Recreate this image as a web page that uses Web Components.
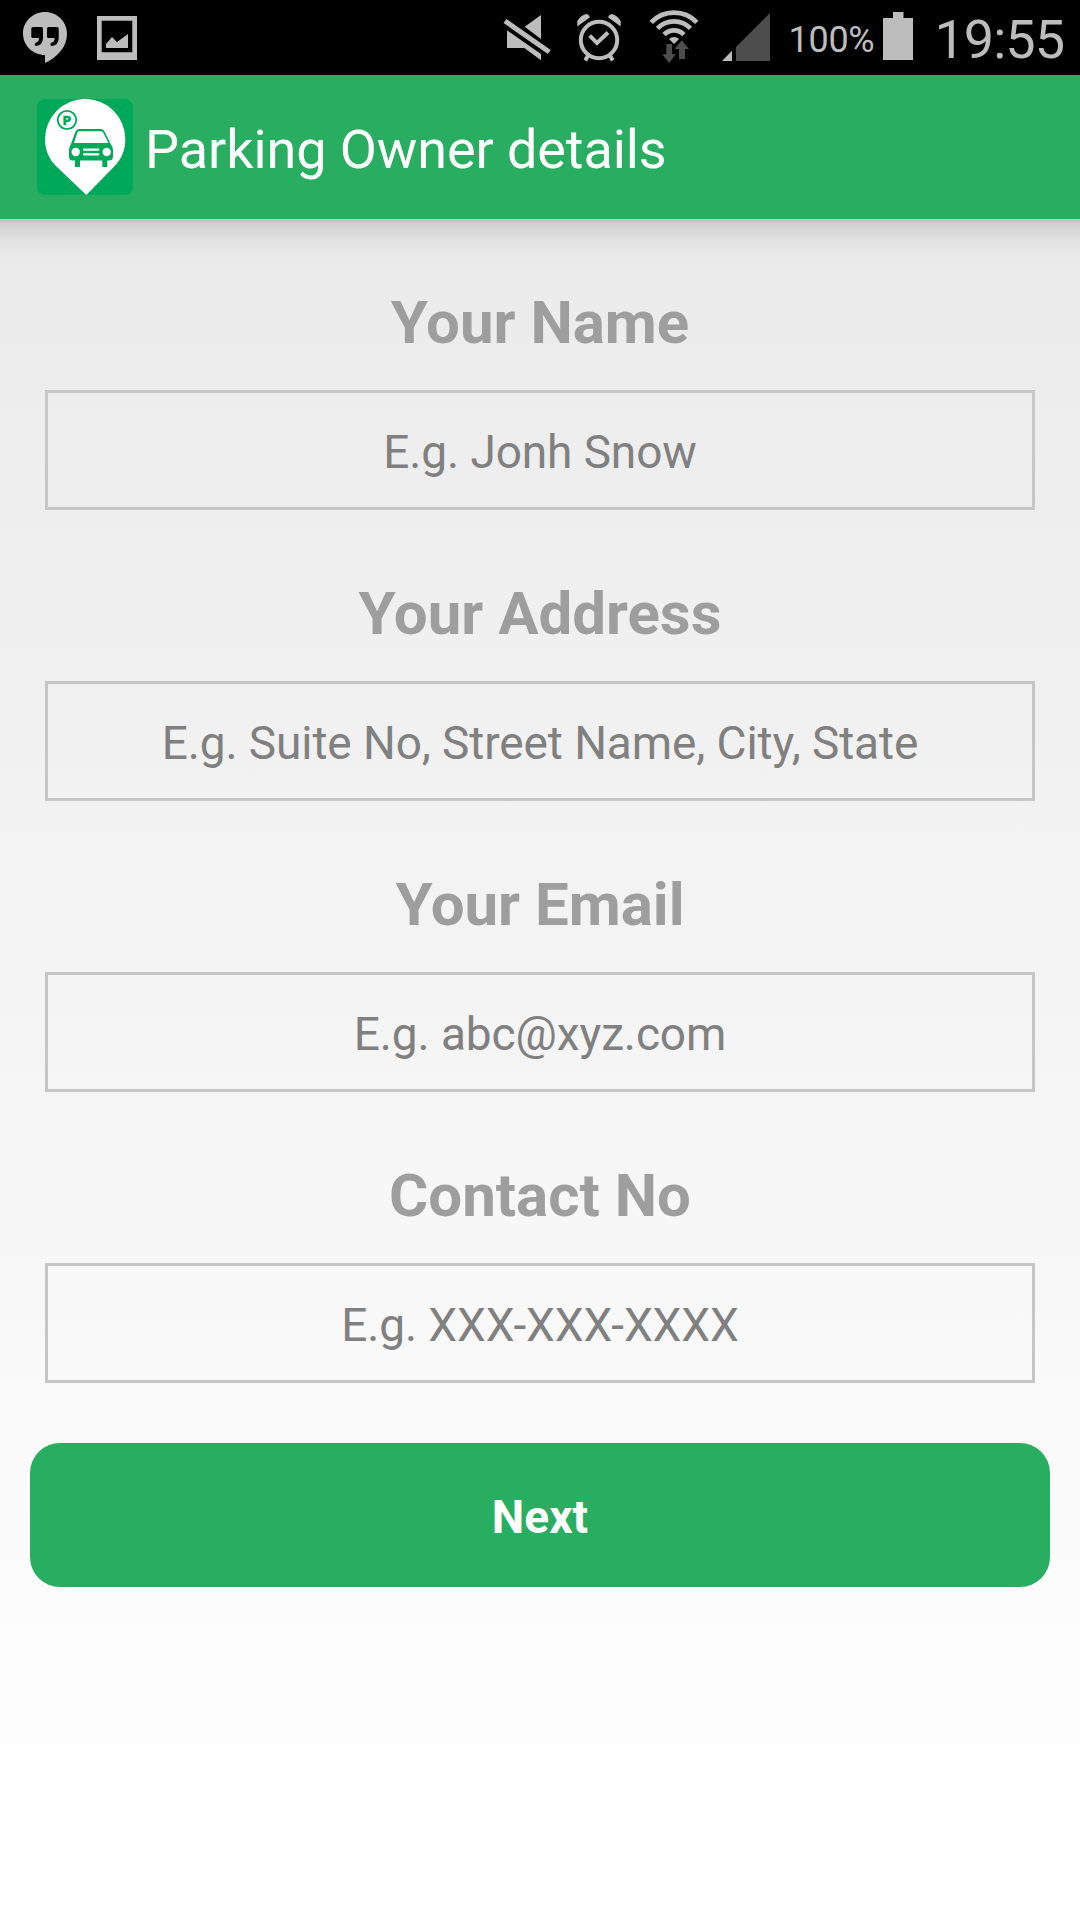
<!DOCTYPE html>
<html lang="en">
<head>
<meta charset="utf-8">
<title>Parking Owner details</title>
<style>
    body {
        margin: 0;
        font-family: Roboto, sans-serif;
    }
</style>
</head>
<body>
<parking-app></parking-app>

<script>
const statusTemplate = document.createElement('template');

statusTemplate.innerHTML = `
<style>
    :host {
        background-color: #000;
        box-sizing: border-box;
        color: #bdbdbd;
        display: flex;
        height: 75px;
        padding: 0 16px 0 20px;
    }

    svg {
        display: block;
        flex: none;
        height: 75px;
    }

    .left {
        display: flex;
        flex: 1;
        gap: 20px;
    }

    .right {
        display: flex;
    }

    .battery {
        font-size: 36px;
        letter-spacing: -0.3px;
        line-height: 80px;
        white-space: nowrap;
        width: 90px;
    }

    .time {
        font-size: 54px;
        letter-spacing: -1px;
        line-height: 80px;
        margin-left: 18px;
        white-space: nowrap;
    }
</style>

<div class="left">
    <svg width="50" viewBox="20 0 50 75">
        <path d="M45 12C57.2 12 67 21.6 67 34C67 47 57 57.500 45 63V55C32.800 55 23 45.500 23 33.500C23 21.600 32.800 12 45 12Z" fill="#bdbdbd"/>
        <path id="quote" d="M33 27H41.500Q43 27 43 28.500V38Q43 45 36 46Q34.500 45.500 34.700 44Q35 42.800 36.500 42.500Q39 41.500 39 38H33Q31.300 38 31.300 36.500V28.500Q31.300 27 33 27Z"/>
        <use href="#quote" x="15.700"/>
    </svg>
    <svg width="50" viewBox="90 0 50 75">
        <path fill="#bdbdbd" fill-rule="evenodd" d="M97 16H137V60H97ZM101.700 20.700V52.200H132.300V20.700Z"/>
        <path fill="#bdbdbd" d="M106 48V44L112 37L117 42L128 34V48Z"/>
    </svg>
</div>
<div class="right">
    <svg width="60" viewBox="500 0 60 75" fill="#bdbdbd">
        <path d="M524.700 26.700L541 15V39ZM507 30.300L541 54V60.300L524.300 48H507Z"/>
        <path d="M505 21L549.300 52" stroke="#bdbdbd" stroke-width="5"/>
    </svg>
    <svg width="80" viewBox="560 0 80 75" fill="none" stroke="#bdbdbd" stroke-width="4">
        <circle cx="599" cy="40" r="18.200"/>
        <path d="M589.700 35.700L597 43L608 32.500M588 55.500L585.300 60.500M610 55.500L612.700 60.500"/>
        <path stroke="none" fill="#bdbdbd" d="M577.300 26.500V21Q581 15 586.500 14Q589 14.500 590 17.300ZM620.700 26.500V21Q617 15 611.500 14Q609 14.500 608 17.300Z"/>
    </svg>
    <svg width="70" viewBox="640 0 70 75">
        <g fill="none" stroke="#bdbdbd" stroke-width="4.700">
            <path d="M651.200 22.300A31.500 31.500 0 0 1 696.800 22.300"/>
            <path d="M657.500 28.400A22.700 22.700 0 0 1 690.500 28.400"/>
            <path d="M664.100 34.600A13.700 13.700 0 0 1 683.900 34.600"/>
        </g>
        <path d="M674 44L669 39A7 7 0 0 1 679 39Z" fill="#bdbdbd"/>
        <path d="M666.300 44H672V54.300H675.700L669.200 63L662.300 54.300H666.300ZM681.700 40.300L689 49H685V59H679V49H674.700Z" fill="#4d4d4d"/>
    </svg>
    <svg width="79" viewBox="710 0 79 75">
        <path d="M722 61L732 50.700V61Z" fill="#bdbdbd"/>
        <path d="M736 61V47L770 13V61Z" fill="#4d4d4d"/>
    </svg>
    <div class="battery">100%</div>
    <svg width="38" viewBox="879 0 38 75">
        <path d="M883 18H893V12H903.500V18H913V60H883Z" fill="#bdbdbd"/>
    </svg>
    <div class="time">19:55</div>
</div>
`;

class StatusBar extends HTMLElement {
    constructor() {
        super();
        this.attachShadow({ mode: 'open' });
        this.shadowRoot.appendChild(statusTemplate.content.cloneNode(true));
    }
}

const headerTemplate = document.createElement('template');

headerTemplate.innerHTML = `
<style>
    :host {
        align-items: center;
        background-color: #29ae61;
        box-sizing: border-box;
        color: #fff;
        display: flex;
        height: 144px;
        padding-left: 37px;
    }

    h1 {
        font-size: 54px;
        font-weight: 400;
        letter-spacing: -0.1px;
        line-height: 64px;
        margin: 6px 0 0 12px;
        white-space: nowrap;
    }
</style>

<svg width="96" height="96" viewBox="37 99 96 96">
    <rect x="37" y="99" width="96" height="96" rx="8" fill="#00a859"/>
    <path d="M86.300 195L55.700 165.700C49 159 45 150 45 139.100A40.150 40.150 0 0 1 125.300 139.100C125.300 151 121 160 113.700 167Z" fill="#fff"/>
    <circle cx="67" cy="120" r="9.200" fill="none" stroke="#00a859" stroke-width="1.800"/>
    <text x="67.200" y="124.700" font-size="12.500" font-weight="900" text-anchor="middle" fill="#00a859" stroke="#00a859" stroke-width=".6">P</text>
    <path fill="#00a859" fill-rule="evenodd" d="M79 129H101Q103.500 129 104.500 131.500L110.700 144Q113 147 113 150V156Q113 160.500 109.500 160.500H107.300V167H102.300V160.500H80V167H75V160.500H72.500Q69 160.500 69 156V150Q69 147 71 144L75.500 131.500Q76.500 129 79 129ZM79 131.200Q78 131.200 77.500 132.300L74 143H108.500L103 132.300Q102.300 131.200 101 131.200Z"/>
    <circle cx="75.700" cy="152" r="4.200" fill="#fff"/>
    <circle cx="106.700" cy="152" r="4.200" fill="#fff"/>
    <path d="M84 149.700H98.300M84 154.300H98.300" stroke="#fff" stroke-width="2.200" stroke-linecap="round"/>
</svg>
<h1><slot></slot></h1>
`;

class AppHeader extends HTMLElement {
    constructor() {
        super();
        this.attachShadow({ mode: 'open' });
        this.shadowRoot.appendChild(headerTemplate.content.cloneNode(true));
    }
}

const fieldTemplate = document.createElement('template');

fieldTemplate.innerHTML = `
<style>
    :host {
        display: block;
        text-align: center;
    }

    h2 {
        color: #9e9e9e;
        font-size: 60px;
        font-weight: 700;
        line-height: 69px;
        margin: 0 0 33px;
    }

    .box {
        border: 3px solid #c6c6c6;
        box-sizing: border-box;
        color: #808080;
        font-size: 46px;
        height: 120px;
        letter-spacing: -0.1px;
        line-height: 119px;
        white-space: nowrap;
    }
</style>

<h2></h2>
<div class="box" role="textbox" contenteditable="true" spellcheck="false"></div>
`;

class FormField extends HTMLElement {
    constructor() {
        super();
        this.attachShadow({ mode: 'open' });
        this.shadowRoot.appendChild(fieldTemplate.content.cloneNode(true));
    }

    connectedCallback() {
        this.shadowRoot.querySelector('h2').textContent = this.getAttribute('label');
        this.shadowRoot.querySelector('.box').textContent = this.getAttribute('hint');
    }
}

const buttonTemplate = document.createElement('template');

buttonTemplate.innerHTML = `
<style>
    :host {
        display: block;
    }

    button {
        background-color: #29ae61;
        border: none;
        border-radius: 30px;
        color: #fff;
        display: block;
        font-family: inherit;
        font-size: 46px;
        font-weight: 700;
        height: 144px;
        padding: 3px 0 0;
        width: 100%;
    }
</style>

<button><slot></slot></button>
`;

class AppButton extends HTMLElement {
    constructor() {
        super();
        this.attachShadow({ mode: 'open' });
        this.shadowRoot.appendChild(buttonTemplate.content.cloneNode(true));
    }
}

const appTemplate = document.createElement('template');

appTemplate.innerHTML = `
<style>
    :host {
        background: linear-gradient(#e9e9e9 75px, #fff 1860px);
        display: flex;
        flex-direction: column;
        height: 1920px;
        overflow: hidden;
        width: 1080px;
    }

    main {
        background:
            linear-gradient(rgba(0, 0, 0, .17), rgba(0, 0, 0, .17)) 0 0 / 100% 3px no-repeat,
            linear-gradient(rgba(0, 0, 0, .12), rgba(0, 0, 0, .04) 50%, rgba(0, 0, 0, 0)) 0 3px / 100% 39px no-repeat;
        flex: 1;
        padding: 69px 30px 0;
    }

    .fields {
        display: flex;
        flex-direction: column;
        gap: 69px;
        margin: 0 15px 60px;
    }
</style>

<status-bar></status-bar>
<app-header>Parking Owner details</app-header>
<main>
    <div class="fields">
        <form-field label="Your Name" hint="E.g. Jonh Snow"></form-field>
        <form-field label="Your Address" hint="E.g. Suite No, Street Name, City, State"></form-field>
        <form-field label="Your Email" hint="E.g. abc@xyz.com"></form-field>
        <form-field label="Contact No" hint="E.g. XXX-XXX-XXXX"></form-field>
    </div>
    <app-button>Next</app-button>
</main>
`;

class ParkingApp extends HTMLElement {
    constructor() {
        super();
        this.attachShadow({ mode: 'open' });
        this.shadowRoot.appendChild(appTemplate.content.cloneNode(true));
    }
}

customElements.define('status-bar', StatusBar);
customElements.define('app-header', AppHeader);
customElements.define('form-field', FormField);
customElements.define('app-button', AppButton);
customElements.define('parking-app', ParkingApp);
</script>
</body>
</html>
